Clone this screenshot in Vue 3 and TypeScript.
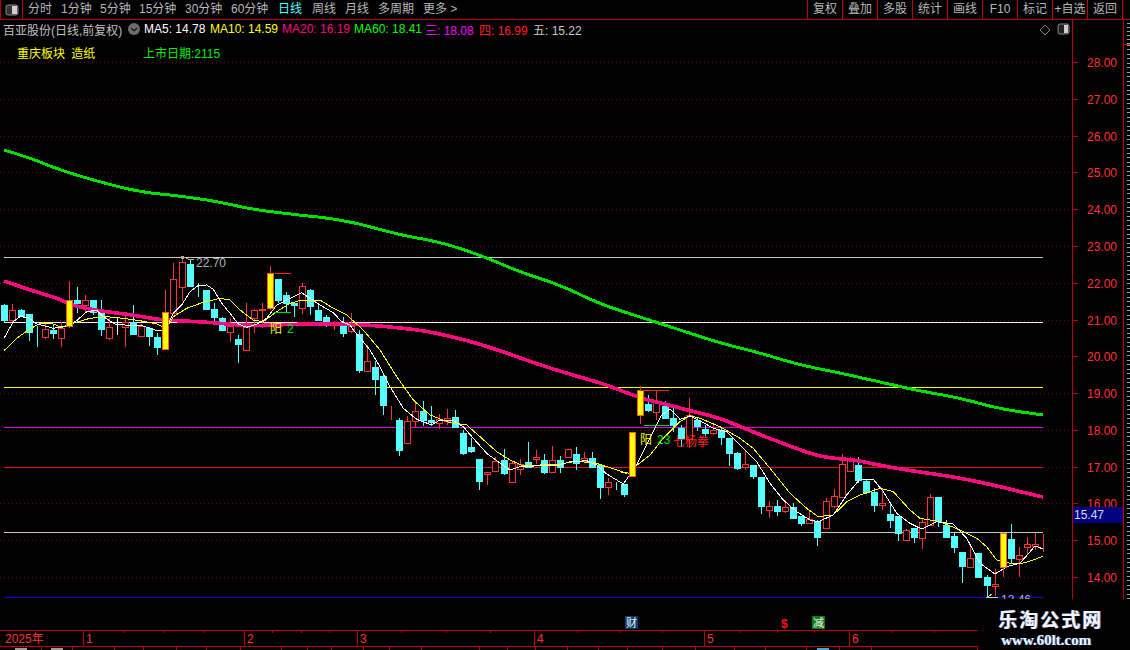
<template>
  <div class="terminal">
    <header class="toolbar">
      <div class="toolbar__toggle">
        <svg width="14" height="12" viewBox="0 0 14 12">
          <rect x="1" y="1" width="12" height="10" rx="2" fill="#333" stroke="#8a8a8a" />
          <rect x="7" y="2" width="5" height="8" fill="#d0d0d0" />
        </svg>
      </div>
      <nav class="toolbar__tabs">
        <span
          v-for="t in periodTabs"
          :key="t.label"
          class="toolbar__tab"
          :class="{ 'toolbar__tab--active': t.label === '日线' }"
          :style="{ width: t.w + 'px' }"
        >{{ t.label }}</span>
      </nav>
      <div class="toolbar__actions">
        <span v-for="a in actions" :key="a" class="toolbar__action">{{ a }}</span>
      </div>
    </header>

    <div class="main">
      <div class="chart">
        <svg class="chart__svg" width="1072" height="610" viewBox="0 20 1072 610">
          <line
            v-for="y in gridYs"
            :key="y"
            x1="0"
            x2="1072"
            :y1="y + 0.5"
            :y2="y + 0.5"
            stroke="#780000"
            stroke-dasharray="1 3"
            shape-rendering="crispEdges"
          />
          <line
            v-for="l in levels"
            :key="l.y"
            x1="4"
            x2="1043"
            :y1="l.y + 0.5"
            :y2="l.y + 0.5"
            :stroke="l.color"
            shape-rendering="crispEdges"
          />

          <g shape-rendering="crispEdges">
            <g v-for="c in plainCandles" :key="c.x">
              <line :x1="c.x + 0.5" :x2="c.x + 0.5" :y1="c.hi" :y2="c.lo" :stroke="c.color" />
              <rect
                :x="c.x - 2.5"
                :y="c.top + 0.5"
                width="6"
                :height="Math.max(c.bot - c.top, 0)"
                :fill="c.fill"
                :stroke="c.color"
              />
            </g>
          </g>

          <polyline class="ma ma--60" :points="ma60" />
          <polyline class="ma ma--20" :points="ma20" />
          <polyline class="ma ma--10" :points="ma10" />
          <polyline class="ma ma--5" :points="ma5" />

          <g shape-rendering="crispEdges">
            <g v-for="c in signalCandles" :key="c.x">
              <line :x1="c.x + 0.5" :x2="c.x + 0.5" :y1="c.hi" :y2="c.lo" stroke="#ff3232" />
              <rect
                :x="c.x - 2.5"
                :y="c.top + 0.5"
                width="6"
                :height="c.bot - c.top"
                fill="#ffff00"
                stroke="#ff5a20"
              />
            </g>
            <line x1="275" x2="291" y1="273.5" y2="273.5" stroke="#ff2020" />
            <line x1="274" x2="291" y1="312.5" y2="312.5" stroke="#00e000" />
            <line x1="640" x2="669" y1="390.5" y2="390.5" stroke="#ff2020" />
            <line x1="644" x2="669" y1="425.5" y2="425.5" stroke="#00e000" />
            <rect x="181" y="256" width="3" height="3" fill="#b0b0b0" />
            <polyline points="184,257 188,259 194,259" fill="none" stroke="#b0b0b0" />
            <polyline points="992,594 988,597 998,597" fill="none" stroke="#c8c8c8" />
          </g>

          <text class="note note--gray" x="196" y="267">22.70</text>
          <text class="note note--gray" x="1001" y="604">13.46</text>
          <text class="note note--yellow" x="270" y="333">阳</text>
          <text class="note note--green" x="287" y="333">2</text>
          <text class="note note--yellow" x="640" y="444">阳</text>
          <text class="note note--green" x="657" y="444">23</text>
          <text class="note note--red" x="673" y="446">七杨拳</text>

          <rect x="625" y="616" width="13" height="13" fill="#0a3a70" />
          <text class="badge" x="626" y="627">财</text>
          <rect x="812" y="616" width="13" height="13" fill="#0a7a14" />
          <text class="badge" x="813" y="627">减</text>
          <text class="note note--dollar" x="781" y="628">$</text>
        </svg>

        <div class="info">
          <div class="info__row">
            <span class="info__name">百亚股份(日线,前复权)</span>
            <span class="info__toggle">
              <svg width="12" height="12" viewBox="0 0 12 12">
                <circle cx="6" cy="6" r="6" fill="#6e6e6e" />
                <path d="M3 5l3 3 3-3" fill="none" stroke="#111" stroke-width="1.2" />
              </svg>
            </span>
            <span
              v-for="m in maValues"
              :key="m.label"
              class="info__ma"
              :style="{ width: m.w + 'px', color: m.color }"
            >{{ m.label }}: {{ m.value }}</span>
          </div>
          <div class="info__row info__row--second">
            <span class="info__sector">重庆板块 造纸</span>
            <span class="info__listed">上市日期:2115</span>
          </div>
        </div>

        <svg class="chart__diamond" width="12" height="12" viewBox="0 0 12 12">
          <path d="M6 1l5 5-5 5-5-5z" fill="none" stroke="#808080" />
        </svg>
        <svg class="chart__layout" width="13" height="12" viewBox="0 0 13 12">
          <rect x="1" y="1" width="11" height="10" rx="2" fill="#222" stroke="#8a8a8a" />
          <rect x="7" y="2" width="4" height="8" fill="#d0d0d0" />
        </svg>
      </div>

      <aside class="scale">
        <div
          v-for="s in scaleMarks"
          :key="s.price"
          class="scale__mark"
          :style="{ top: s.y - 20 + 'px' }"
        >
          <i class="scale__tick" />
          <span class="scale__text">{{ s.price.toFixed(2) }}</span>
        </div>
        <div class="scale__current">15.47</div>
      </aside>

      <aside class="strip">
        <div class="strip__top" />
        <div class="strip__ticks" />
      </aside>
    </div>

    <footer class="axis">
      <div v-for="m in months" :key="m.label" class="axis__cell" :style="{ width: m.w + 'px' }">
        {{ m.label }}
      </div>
      <i v-for="x in axisTicks" :key="x" class="axis__tick" :style="{ left: x + 'px' }" />
    </footer>

    <div class="sheet-tabs">
      <span
        v-for="t in sheetTabs"
        :key="t.edge"
        class="sheet-tabs__tab"
        :style="{ width: t.w + 'px' }"
      >
        <i v-if="t.glyph" class="sheet-tabs__glyph" :style="{ background: t.glyph }" />
      </span>
    </div>

    <div class="watermark">
      <div class="watermark__name">乐淘公式网</div>
      <div class="watermark__url">www.60lt.com</div>
    </div>
  </div>
</template>

<script setup lang="ts">
type Kind = 'd' | 'u' | 'y' | 'c' | 'r' | 'w';
type Raw = [Kind, number, number, number, number];
type Pt = [number, number];

const periodTabs = [
  { label: '分时', w: 33 },
  { label: '1分钟', w: 39 },
  { label: '5分钟', w: 39 },
  { label: '15分钟', w: 46 },
  { label: '30分钟', w: 46 },
  { label: '60分钟', w: 47 },
  { label: '日线', w: 34 },
  { label: '周线', w: 33 },
  { label: '月线', w: 33 },
  { label: '多周期', w: 45 },
  { label: '更多 >', w: 40 },
];
const actions = ['复权', '叠加', '多股', '统计', '画线', 'F10', '标记', '+自选', '返回'];

const maValues = [
  { label: 'MA5', value: '14.78', color: '#ffffff', w: 66 },
  { label: 'MA10', value: '14.59', color: '#ffff00', w: 72 },
  { label: 'MA20', value: '16.19', color: '#ff0080', w: 72 },
  { label: 'MA60', value: '18.41', color: '#00ff00', w: 71 },
  { label: '三', value: '18.08', color: '#ff00ff', w: 54 },
  { label: '四', value: '16.99', color: '#ff2020', w: 54 },
  { label: '五', value: '15.22', color: '#c8c8c8', w: 60 },
];

const priceY = (p: number) => Math.round(62 + (28 - p) * 36.79);
const scaleMarks = [28, 27, 26, 25, 24, 23, 22, 21, 20, 19, 18, 17, 16, 15, 14].map((price) => ({
  price,
  y: priceY(price),
}));
const gridYs = scaleMarks.map((s) => s.y);

const levels = [
  { y: 257, color: '#c8c8c8' },
  { y: 322, color: '#f0f0f0' },
  { y: 387, color: '#ffff00' },
  { y: 427, color: '#e000e0' },
  { y: 467, color: '#e81010' },
  { y: 532, color: '#c8c8c8' },
  { y: 597, color: '#0000e0' },
];

// candles read off the chart, per stretch: kind, body top, body bottom, wick top, wick bottom
const stretchA: Raw[] = [
  ['d', 165, 210, 162, 215], ['u', 181, 209, 162, 217], ['d', 180, 198, 176, 200], ['d', 192, 245, 192, 272],
  ['c', 258, 258, 228, 290], ['u', 238, 260, 220, 268], ['d', 240, 248, 222, 268], ['u', 235, 263, 215, 290],
  ['y', 150, 228, 93, 235], ['d', 150, 160, 110, 190], ['u', 151, 164, 134, 185], ['d', 150, 185, 150, 195],
  ['d', 185, 237, 150, 258], ['u', 232, 263, 205, 270], ['w', 228, 228, 205, 255], ['u', 215, 230, 195, 290],
  ['d', 215, 252, 165, 255], ['u', 228, 257, 222, 262], ['d', 233, 258, 230, 288], ['d', 261, 290, 250, 315],
  ['y', 187, 296, 120, 296], ['u', 88, 188, 40, 190], ['u', 37, 110, 20, 152], ['d', 42, 108, 30, 108],
  ['c', 106, 106, 100, 140], ['d', 120, 177, 120, 180], ['d', 177, 201, 160, 212], ['d', 204, 240, 200, 240],
  ['u', 228, 245, 205, 275], ['d', 267, 282, 255, 338], ['u', 232, 299, 160, 300], ['u', 181, 203, 178, 250],
  ['u', 176, 181, 160, 235], ['y', 70, 173, 48, 180], ['d', 87, 151, 87, 158], ['d', 135, 158, 125, 190],
  ['d', 159, 164, 160, 200], ['u', 109, 173, 100, 192], ['d', 120, 167, 118, 195], ['d', 180, 210, 165, 212],
  ['d', 201, 217, 195, 232], ['r', 230, 230, 213, 240], ['d', 225, 248, 200, 262], ['u', 227, 242, 190, 250],
];
const stretchB: Raw[] = [
  ['d', 12, 120, 0, 128], ['u', 93, 122, 45, 122], ['d', 110, 147, 93, 195], ['d', 138, 225, 130, 255],
  ['r', 241, 241, 228, 270], ['d', 270, 360, 265, 378], ['u', 274, 338, 258, 338], ['u', 243, 272, 215, 290],
  ['d', 243, 270, 212, 288], ['d', 270, 275, 228, 288], ['u', 268, 278, 252, 296], ['u', 265, 273, 238, 285],
  ['d', 261, 291, 240, 291], ['d', 308, 368, 300, 375], ['d', 351, 362, 325, 368], ['d', 387, 453, 387, 480],
  ['u', 427, 433, 427, 465], ['u', 392, 422, 380, 422], ['d', 390, 428, 358, 435], ['u', 398, 455, 395, 455],
  ['u', 402, 416, 388, 435], ['d', 396, 410, 336, 410], ['u', 382, 388, 360, 402], ['d', 390, 426, 372, 432],
  ['u', 391, 426, 348, 428], ['d', 390, 410, 378, 430], ['u', 358, 381, 358, 381], ['d', 372, 400, 351, 420],
  ['u', 385, 392, 366, 400], ['d', 384, 411, 365, 415], ['d', 405, 470, 405, 507], ['u', 456, 472, 445, 495],
  ['c', 456, 456, 456, 480], ['d', 462, 492, 462, 500],
];
const stretchC: Raw[] = [
  ['y', 156, 287, 156, 287], ['y', 30, 104, 18, 133], ['d', 72, 90, 45, 97], ['u', 62, 95, 32, 120],
  ['d', 77, 113, 62, 113], ['d', 115, 135, 85, 155], ['d', 144, 175, 135, 200], ['u', 106, 178, 55, 205],
  ['d', 121, 137, 115, 152], ['d', 147, 159, 135, 168], ['u', 151, 158, 135, 165], ['d', 150, 170, 145, 195],
  ['d', 175, 218, 175, 258], ['d', 219, 263, 215, 270], ['u', 252, 262, 210, 270], ['d', 255, 288, 255, 298],
  ['d', 291, 377, 291, 402], ['u', 379, 389, 363, 413], ['d', 378, 393, 360, 408], ['u', 382, 392, 360, 400],
  ['d', 382, 413, 370, 415], ['d', 408, 429, 408, 438], ['u', 417, 430, 390, 432], ['d', 422, 470, 420, 497],
  ['u', 364, 443, 355, 443], ['u', 349, 377, 326, 385], ['u', 253, 350, 222, 350], ['u', 240, 272, 232, 272],
  ['d', 255, 300, 232, 308],
];
const stretchD: Raw[] = [
  ['d', 92, 125, 88, 132], ['d', 125, 165, 115, 185], ['u', 160, 166, 115, 180], ['d', 192, 210, 160, 235],
  ['d', 198, 250, 198, 272], ['u', 240, 269, 238, 269], ['d', 235, 261, 235, 278], ['u', 216, 263, 205, 297],
  ['u', 142, 226, 132, 226], ['d', 142, 214, 142, 230], ['d', 225, 261, 210, 265], ['d', 258, 291, 250, 310],
  ['d', 306, 348, 306, 398], ['u', 325, 350, 295, 350], ['d', 310, 381, 310, 382], ['d', 381, 404, 375, 440],
  ['u', 403, 409, 358, 438], ['y', 250, 352, 250, 382], ['d', 268, 323, 222, 340], ['u', 314, 328, 290, 382],
  ['u', 281, 292, 262, 312], ['u', 281, 287, 250, 300], ['r', 282, 282, 253, 305],
];

const stretches: Array<[number, Raw[]]> = [
  [250, stretchA],
  [330, stretchB],
  [380, stretchC],
  [450, stretchD],
];
const candles = stretches
  .flatMap(([oy, rows]) =>
    rows.map(([kind, top, bot, hi, lo]) => ({
      kind,
      top: Math.round(oy + top / 3),
      bot: Math.round(oy + bot / 3),
      hi: Math.round(oy + hi / 3),
      lo: Math.round(oy + lo / 3),
    })),
  )
  .map((c, i) => {
    const cyan = c.kind === 'd' || c.kind === 'c';
    const color = c.kind === 'w' ? '#ffffff' : cyan ? '#55ffff' : '#ff3232';
    return { ...c, x: Math.round(4.4 + 8.05 * i), color, fill: cyan ? '#55ffff' : '#000000' };
  });
const plainCandles = candles.filter((c) => c.kind !== 'y');
const signalCandles = candles.filter((c) => c.kind === 'y');

// crop-relative points back to page pixels
const crop = (ox: number, oy: number, pts: Pt[]) =>
  pts.map(([x, y]) => `${(ox + x / 3).toFixed(1)},${(oy + y / 3).toFixed(1)}`).join(' ');

// corner cutting, the long averages are smooth curves
function smooth(pts: Pt[], rounds = 3): string {
  let out = pts;
  for (let r = 0; r < rounds; r++) {
    const next: Pt[] = [out[0]];
    for (let i = 0; i < out.length - 1; i++) {
      const [ax, ay] = out[i];
      const [bx, by] = out[i + 1];
      next.push([ax * 0.75 + bx * 0.25, ay * 0.75 + by * 0.25]);
      next.push([ax * 0.25 + bx * 0.75, ay * 0.25 + by * 0.75]);
    }
    next.push(out[out.length - 1]);
    out = next;
  }
  return out.map(([x, y]) => `${x.toFixed(1)},${y.toFixed(1)}`).join(' ');
}

const ma60 = smooth([
  [4, 150], [30, 158], [60, 170], [100, 182], [140, 192], [180, 196], [220, 202], [250, 209], [290, 214],
  [345, 220], [400, 235], [440, 242], [480, 255], [520, 272], [560, 285], [600, 304], [640, 317], [680, 330],
  [720, 343], [760, 353], [800, 365], [840, 373], [880, 382], [920, 391], [960, 398], [1000, 409], [1043, 415],
]);

const ma20 = smooth([
  [4, 281], [33, 291], [60, 299], [70, 305], [100, 311], [133, 315], [160, 320], [207, 322], [247, 326],
  [300, 324], [360, 324], [420, 330], [440, 334], [473, 342], [507, 353], [540, 365], [573, 375], [607, 385],
  [640, 398], [673, 406], [687, 410], [720, 418], [753, 432], [787, 445], [820, 457], [853, 460], [860, 461],
  [893, 468], [927, 473], [960, 478], [993, 485], [1043, 497],
]);

const ma5 = [
  crop(0, 250, [[12, 265], [40, 215], [60, 200], [85, 203], [110, 222], [135, 228], [160, 235], [200, 228], [230, 212], [260, 185], [290, 180], [310, 200], [345, 222], [375, 225], [420, 225], [450, 235], [470, 242], [495, 240], [520, 190], [545, 165], [570, 125], [595, 106], [620, 105], [640, 118], [665, 160], [690, 190], [715, 222], [740, 232], [770, 222], [800, 205], [830, 165], [860, 150], [905, 128], [930, 145], [960, 165], [1000, 188], [1025, 215], [1050, 225]]),
  crop(340, 330, [[40, 0], [90, 60], [120, 110], [150, 170], [190, 235], [230, 268], [275, 285], [300, 270], [340, 272], [370, 290], [400, 325], [440, 370], [470, 392], [510, 420], [540, 410], [600, 407], [660, 405], [690, 395], [740, 392], [770, 405], [800, 432], [850, 462]]),
  crop(620, 380, [[48, 258], [90, 175], [125, 105], [150, 87], [180, 118], [210, 108], [245, 125], [280, 145], [320, 155], [370, 205], [410, 245], [450, 310], [490, 360], [530, 395], [570, 420], [595, 425], [640, 405], [680, 345], [720, 297]]),
  crop(860, 450, [[40, 88], [70, 125], [110, 190], [150, 220], [185, 237], [230, 215], [280, 222], [320, 265], [360, 340], [405, 372], [440, 350], [480, 340], [525, 288], [550, 297]]),
].join(' ');

const ma10 = [
  crop(0, 250, [[12, 302], [50, 265], [85, 240], [120, 220], [160, 222], [185, 232], [205, 225], [235, 215], [270, 205], [320, 200], [370, 205], [420, 212], [470, 222], [500, 235], [520, 200], [560, 175], [610, 157], [660, 145], [690, 150], [720, 180], [760, 210], [790, 215], [830, 185], [870, 160], [905, 150], [960, 150], [1000, 175], [1040, 195]]),
  crop(340, 330, [[70, 0], [120, 60], [170, 140], [220, 210], [270, 255], [330, 278], [380, 285], [420, 320], [470, 365], [510, 390], [550, 408], [600, 405], [660, 402], [700, 395], [760, 397], [800, 410], [860, 430]]),
  crop(620, 380, [[0, 275], [30, 280], [48, 258], [90, 225], [130, 175], [180, 125], [210, 107], [240, 115], [300, 140], [360, 175], [400, 205], [450, 265], [510, 340], [560, 385], [595, 410], [640, 405], [680, 365], [720, 345]]),
  crop(860, 450, [[60, 115], [100, 125], [150, 180], [180, 205], [240, 215], [300, 240], [350, 265], [380, 290], [410, 330], [450, 340], [480, 342], [520, 330], [550, 318]]),
].join(' ');

const months = [
  { label: '2025年', w: 83 },
  { label: '1', w: 161 },
  { label: '2', w: 113 },
  { label: '3', w: 177 },
  { label: '4', w: 170 },
  { label: '5', w: 145 },
  { label: '6', w: 129 },
];
const axisTicks = [123, 164, 204, 272, 301, 329, 401, 446, 490, 577, 619, 662, 740, 777, 814, 892, 934];

// the sheet tab row is cut by the window, only the top pixels of a few labels show
const sheetEdges = [42, 73, 115, 144, 177, 207, 241, 282, 308, 332, 364, 390, 422, 480, 508, 536, 568, 599, 628, 663, 696, 735, 766, 807, 840, 872, 978];
const sheetGlyphs: Record<number, string> = { 0: '#e0e0e0', 1: '#e0e0e0', 24: '#55ffff' };
const sheetTabs = sheetEdges.map((edge, i) => ({
  edge,
  w: edge - (i ? sheetEdges[i - 1] : 0),
  glyph: sheetGlyphs[i],
}));
</script>

<style scoped>
.terminal {
  position: relative;
  width: 1130px;
  height: 650px;
  overflow: hidden;
  background: #000;
  color: #c0c0c0;
  font-family: "Liberation Sans", "Noto Sans CJK SC", sans-serif;
  font-size: 12px;
}
.toolbar {
  display: flex;
  align-items: center;
  height: 20px;
  box-sizing: border-box;
  border-bottom: 1px solid #c00000;
}
.toolbar__toggle {
  display: flex;
  align-items: center;
  justify-content: center;
  width: 23px;
  height: 19px;
  box-sizing: border-box;
  border-left: 1px solid #c00000;
  border-right: 1px solid #c00000;
  margin-right: 5px;
}
.toolbar__tabs {
  display: flex;
}
.toolbar__tab {
  white-space: nowrap;
  line-height: 19px;
  color: #b8b8b8;
}
.toolbar__tab--active {
  color: #55ffff;
}
.toolbar__actions {
  display: flex;
  margin-left: auto;
  margin-right: 7px;
}
.toolbar__action {
  width: 35px;
  height: 19px;
  line-height: 19px;
  text-align: center;
  white-space: nowrap;
  box-sizing: border-box;
  border-left: 1px solid #c00000;
  color: #b8b8b8;
}
.toolbar__action:last-child {
  width: 36px;
  border-right: 1px solid #c00000;
}
.main {
  display: flex;
  height: 610px;
}
.chart {
  position: relative;
  width: 1072px;
  height: 610px;
}
.chart__svg {
  display: block;
}
.chart__diamond {
  position: absolute;
  left: 1039px;
  top: 4px;
}
.chart__layout {
  position: absolute;
  left: 1057px;
  top: 3px;
}
.ma {
  fill: none;
  shape-rendering: crispEdges;
}
.ma--60 {
  stroke: #00e000;
  stroke-width: 3;
}
.ma--20 {
  stroke: #ff0a80;
  stroke-width: 3.6;
}
.ma--10 {
  stroke: #ffff00;
}
.ma--5 {
  stroke: #ffffff;
}
.note {
  font-size: 12px;
  font-family: "Liberation Sans", "Noto Sans CJK SC", sans-serif;
}
.note--gray {
  fill: #b4b4b4;
}
.note--yellow {
  fill: #ffff00;
}
.note--green {
  fill: #00e000;
}
.note--red {
  fill: #ff2020;
}
.note--dollar {
  fill: #ff1010;
  font-weight: 700;
}
.badge {
  font-size: 11px;
  fill: #f0f0f0;
  font-family: "Noto Sans CJK SC", sans-serif;
}
.info {
  position: absolute;
  left: 0;
  top: 0;
}
.info__row {
  display: flex;
  align-items: center;
  height: 18px;
  white-space: nowrap;
}
.info__row--second {
  margin-top: 5px;
}
.info__name {
  width: 128px;
  padding-left: 3px;
  box-sizing: border-box;
  color: #c0c0c0;
}
.info__toggle {
  display: flex;
  width: 16px;
}
.info__sector {
  width: 126px;
  padding-left: 17px;
  word-spacing: 3px;
  color: #ffff00;
}
.info__listed {
  color: #00f000;
}
.scale {
  position: relative;
  width: 51px;
  height: 610px;
  box-sizing: border-box;
  border-left: 1px solid #c00000;
}
.scale__mark {
  position: absolute;
  left: 0;
  display: flex;
  align-items: center;
  height: 0;
}
.scale__tick {
  width: 5px;
  height: 1px;
  background: #c00000;
}
.scale__text {
  position: relative;
  top: 1px;
  margin-left: 9px;
  color: #ff3232;
}
.scale__current {
  position: absolute;
  left: 0;
  top: 487px;
  width: 50px;
  height: 16px;
  line-height: 16px;
  padding-left: 1px;
  box-sizing: border-box;
  background: #000080;
  color: #d8d8e8;
}
.strip {
  width: 7px;
  height: 610px;
  box-sizing: border-box;
  border-left: 1px solid #c00000;
}
.strip__top {
  height: 25px;
  box-sizing: border-box;
  border-bottom: 1px solid #c00000;
  background: repeating-linear-gradient(#000 0 3px, #a0a0a0 3px 4px) right / 3px 100% no-repeat;
}
.strip__ticks {
  height: 585px;
  background: repeating-linear-gradient(#a0a0a0 0 1px, #000 1px 4px, #a0a0a0 4px 5px, #000 5px 9px) right / 3px 100% no-repeat;
}
.axis {
  position: relative;
  display: flex;
  width: 978px;
  height: 17px;
  box-sizing: border-box;
  border-top: 1px solid #c00000;
  border-bottom: 1px solid #c00000;
}
.axis__cell {
  height: 15px;
  line-height: 16px;
  padding-left: 2px;
  box-sizing: border-box;
  border-left: 1px solid #c00000;
  color: #ff3232;
}
.axis__cell:first-child {
  border-left: 0;
  padding-left: 5px;
}
.axis__tick {
  position: absolute;
  top: 0;
  width: 1px;
  height: 2px;
  background: #c00000;
}
.sheet-tabs {
  display: flex;
  height: 3px;
  width: 978px;
}
.sheet-tabs__tab {
  display: flex;
  align-items: flex-end;
  justify-content: center;
  height: 3px;
  box-sizing: border-box;
  border-right: 1px solid #c00000;
}
.sheet-tabs__glyph {
  width: 12px;
  height: 2px;
  opacity: 0.7;
}
.watermark {
  position: absolute;
  right: 0;
  bottom: 0;
  width: 152px;
  height: 51px;
  padding-left: 20px;
  box-sizing: border-box;
  background: #000;
}
.watermark__name {
  margin-top: 9px;
  height: 22px;
  line-height: 22px;
  font-family: "Noto Sans CJK SC", sans-serif;
  font-size: 19px;
  font-weight: 700;
  letter-spacing: 2px;
  color: #f4f4ff;
  text-shadow: 1px 0 0 #7f96c8;
}
.watermark__url {
  padding-left: 3px;
  margin-top: 3px;
  line-height: 15px;
  font-family: "Liberation Serif", serif;
  font-size: 15px;
  font-weight: 700;
  color: #eef4ff;
  text-shadow: 1px 0 0 #4a70c0;
}
</style>
